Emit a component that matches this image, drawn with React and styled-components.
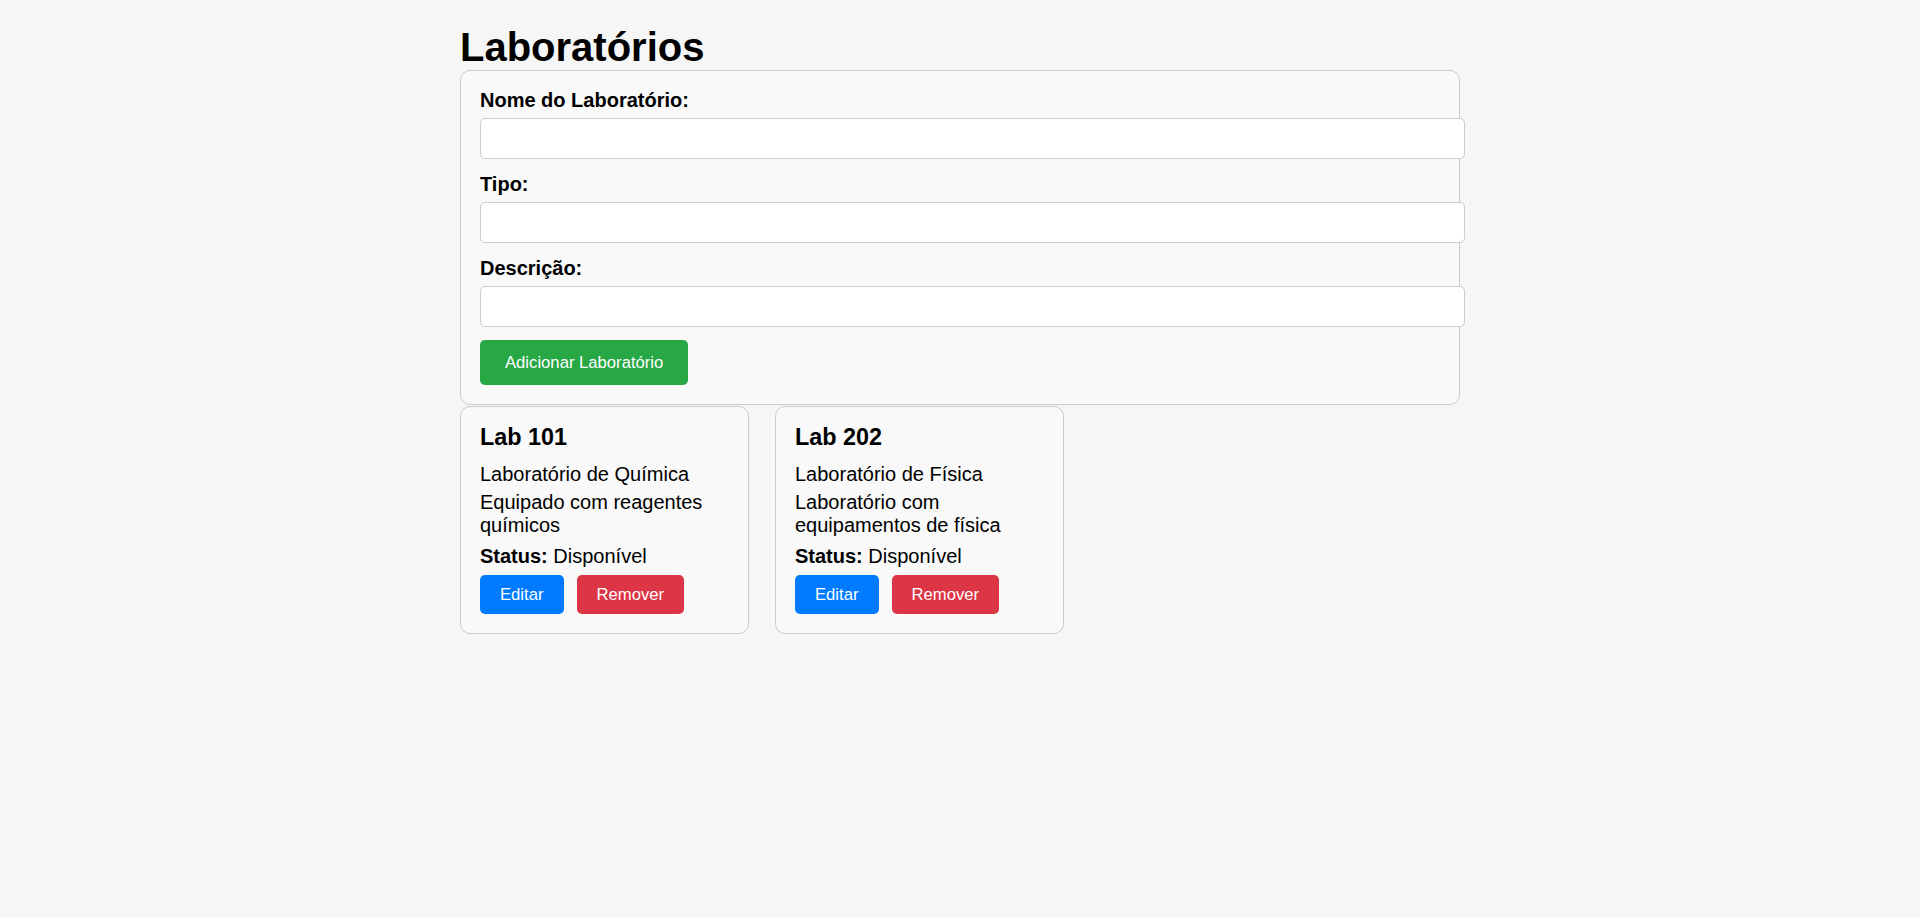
import React, { useState } from "react";
import styled, { createGlobalStyle } from "styled-components";

const GlobalStyle = createGlobalStyle`
  html, body {
    margin: 0;
    padding: 0;
    background: #f6f6f6;
    font-family: "Liberation Sans", Arial, sans-serif;
    color: #000;
  }
`;

const Page = styled.div`
  width: 1000px;
  margin: 0 auto;
  padding-top: 24px;
`;

const Title = styled.h1`
  margin: 0;
  font-size: 40px;
  font-weight: bold;
  line-height: 46px;
`;

const Form = styled.form`
  background: #f9f9f9;
  border: 1px solid #cccccc;
  border-radius: 10px;
  padding: 18px 20px 19px 19px;
`;

const Label = styled.label`
  display: block;
  font-size: 20px;
  font-weight: bold;
  line-height: 23px;
  margin-bottom: 6px;
`;

const Input = styled.input`
  display: block;
  box-sizing: border-box;
  width: calc(100% + 26px);
  height: 41px;
  margin: 0 0 14px;
  padding: 10px 12px;
  border: 1px solid #cccccc;
  border-radius: 5px;
  background: #ffffff;
  font-family: "Liberation Sans", Arial, sans-serif;
  font-size: 16px;
  outline: none;
`;

const colors = {
  green: "#28a745",
  blue: "#007bff",
  red: "#dc3545",
};

const Button = styled.button`
  display: inline-block;
  border: none;
  border-radius: 5px;
  color: #ffffff;
  background: ${(p) => colors[p.$color]};
  font-family: "Liberation Sans", Arial, sans-serif;
  font-size: 16.67px;
  line-height: 19px;
  padding: ${(p) => (p.$small ? "10px 20px" : "13px 25px")};
  cursor: pointer;
`;

const SubmitRow = styled.div`
  margin-top: -1px;
`;

const CardList = styled.div`
  display: flex;
  gap: 26px;
  margin-top: 1px;
`;

const Card = styled.div`
  box-sizing: border-box;
  width: 289px;
  background: #f9f9f9;
  border: 1px solid #cccccc;
  border-radius: 10px;
  padding: 17px 20px 19px 19px;
`;

const CardTitle = styled.h3`
  margin: 0 0 12px;
  font-size: 23.4px;
  line-height: 27px;
  font-weight: bold;
`;

const Text = styled.p`
  margin: 0 0 ${(p) => p.$gap || 5}px;
  font-size: 20px;
  line-height: 23px;
`;

const Actions = styled.div`
  display: flex;
  gap: 13px;
  margin-top: 7px;
`;

const initialLabs = [
  {
    id: 1,
    nome: "Lab 101",
    tipo: "Laboratório de Química",
    descricao: "Equipado com reagentes químicos",
    status: "Disponível",
  },
  {
    id: 2,
    nome: "Lab 202",
    tipo: "Laboratório de Física",
    descricao: "Laboratório com equipamentos de física",
    status: "Disponível",
  },
];

export default function App() {
  const [labs] = useState(initialLabs);
  const [nome, setNome] = useState("");
  const [tipo, setTipo] = useState("");
  const [descricao, setDescricao] = useState("");

  return (
    <>
      <GlobalStyle />
      <Page>
        <Title>Laboratórios</Title>
        <Form onSubmit={(e) => e.preventDefault()}>
          <Label>Nome do Laboratório:</Label>
          <Input value={nome} onChange={(e) => setNome(e.target.value)} />
          <Label>Tipo:</Label>
          <Input value={tipo} onChange={(e) => setTipo(e.target.value)} />
          <Label>Descrição:</Label>
          <Input value={descricao} onChange={(e) => setDescricao(e.target.value)} />
          <SubmitRow>
            <Button type="submit" $color="green">
              Adicionar Laboratório
            </Button>
          </SubmitRow>
        </Form>
        <CardList>
          {labs.map((lab) => (
            <Card key={lab.id}>
              <CardTitle>{lab.nome}</CardTitle>
              <Text>{lab.tipo}</Text>
              <Text $gap={8}>{lab.descricao}</Text>
              <Text $gap={0}>
                <strong>Status:</strong> {lab.status}
              </Text>
              <Actions>
                <Button $small $color="blue">Editar</Button>
                <Button $small $color="red">Remover</Button>
              </Actions>
            </Card>
          ))}
        </CardList>
      </Page>
    </>
  );
}
